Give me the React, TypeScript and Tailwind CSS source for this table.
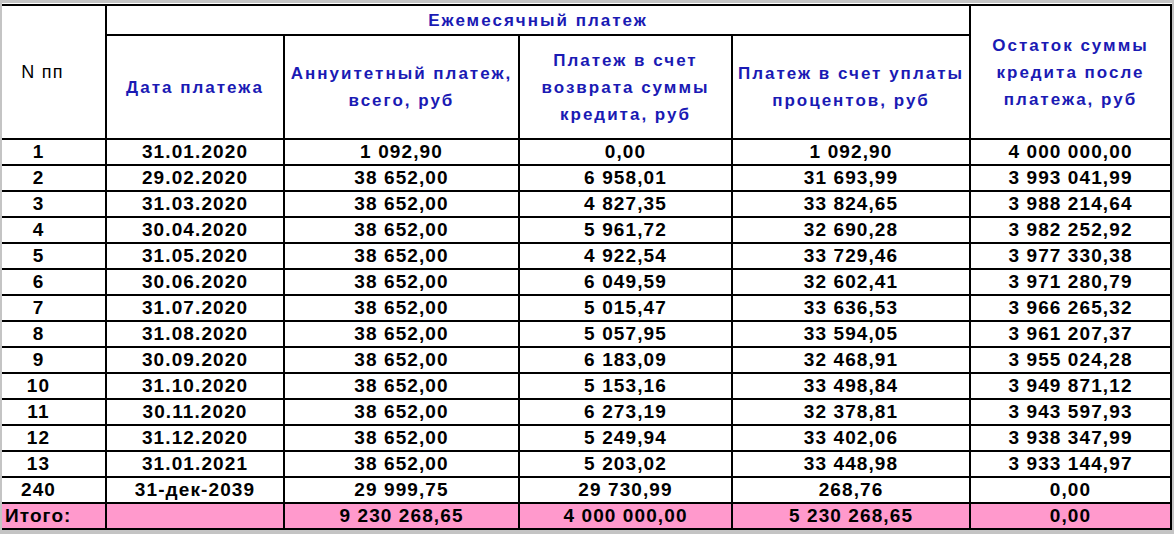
const rows: [string, string, string, string, string, string][] = [
  ['1', '31.01.2020', '1 092,90', '0,00', '1 092,90', '4 000 000,00'],
  ['2', '29.02.2020', '38 652,00', '6 958,01', '31 693,99', '3 993 041,99'],
  ['3', '31.03.2020', '38 652,00', '4 827,35', '33 824,65', '3 988 214,64'],
  ['4', '30.04.2020', '38 652,00', '5 961,72', '32 690,28', '3 982 252,92'],
  ['5', '31.05.2020', '38 652,00', '4 922,54', '33 729,46', '3 977 330,38'],
  ['6', '30.06.2020', '38 652,00', '6 049,59', '32 602,41', '3 971 280,79'],
  ['7', '31.07.2020', '38 652,00', '5 015,47', '33 636,53', '3 966 265,32'],
  ['8', '31.08.2020', '38 652,00', '5 057,95', '33 594,05', '3 961 207,37'],
  ['9', '30.09.2020', '38 652,00', '6 183,09', '32 468,91', '3 955 024,28'],
  ['10', '31.10.2020', '38 652,00', '5 153,16', '33 498,84', '3 949 871,12'],
  ['11', '30.11.2020', '38 652,00', '6 273,19', '32 378,81', '3 943 597,93'],
  ['12', '31.12.2020', '38 652,00', '5 249,94', '33 402,06', '3 938 347,99'],
  ['13', '31.01.2021', '38 652,00', '5 203,02', '33 448,98', '3 933 144,97'],
  ['240', '31-дек-2039', '29 999,75', '29 730,99', '268,76', '0,00'],
]

const head = 'border-b-2 border-r-2 border-black flex items-center justify-center text-center text-[17px] leading-[27px] font-bold tracking-[2px] text-[#1a1ab4] whitespace-nowrap'
const cell = 'border-b-2 border-r-2 border-black flex items-center justify-center text-[19px] font-bold tracking-[1.1px] text-black whitespace-nowrap'

export default function App() {
  return (
    <div className="w-[1174px] h-[534px] bg-[#c4c4c4] pt-[3px] px-[2px] overflow-hidden" style={{ fontFamily: '"Liberation Sans", Arial, sans-serif' }}>
      <div className="bg-white pt-[1px]">
        <div className="grid grid-cols-[105px_178px_235px_213px_238px_201px] grid-rows-[30px_104px_repeat(15,26px)] border-t-2 border-black">
          {/* header */}
          <div className="row-span-2 border-b-2 border-r-2 border-black flex items-center justify-center pr-[22px] text-[18px] tracking-[1.2px] text-black">
            N пп
          </div>
          <div className={`col-span-4 ${head}`}>Ежемесячный платеж</div>
          <div className={`row-span-2 ${head} border-r-0`}>
            Остаток суммы<br />кредита после<br />платежа, руб
          </div>
          <div className={head}>Дата платежа</div>
          <div className={head}>Аннуитетный платеж,<br />всего, руб</div>
          <div className={head}>Платеж в счет<br />возврата суммы<br />кредита, руб</div>
          <div className={head}>Платеж в счет уплаты<br />процентов, руб</div>

          {/* data */}
          {rows.map(r => (
            <div key={r[0]} className="contents">
              <div className={`${cell} pr-[30px]`}>{r[0]}</div>
              <div className={cell}>{r[1]}</div>
              <div className={cell}>{r[2]}</div>
              <div className={cell}>{r[3]}</div>
              <div className={cell}>{r[4]}</div>
              <div className={`${cell} border-r-0`}>{r[5]}</div>
            </div>
          ))}

          {/* total */}
          <div className={`${cell} bg-[#ff99cc] justify-start pl-[3px]`}>Итого:</div>
          <div className={`${cell} bg-[#ff99cc]`}></div>
          <div className={`${cell} bg-[#ff99cc]`}>9 230 268,65</div>
          <div className={`${cell} bg-[#ff99cc]`}>4 000 000,00</div>
          <div className={`${cell} bg-[#ff99cc]`}>5 230 268,65</div>
          <div className={`${cell} bg-[#ff99cc] border-r-0`}>0,00</div>
        </div>
      </div>
    </div>
  )
}
